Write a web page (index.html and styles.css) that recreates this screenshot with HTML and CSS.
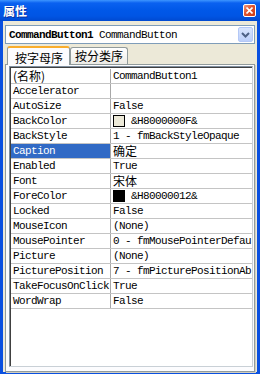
FILE: index.html
```html
<!DOCTYPE html>
<html lang="zh">
<head>
    <meta charset="UTF-8">
    <title>属性</title>
    <link rel="stylesheet" href="styles.css">
</head>
<body>
    <div class="window">
        <div class="titlebar">
            <span class="title">属性</span>
            <span class="close">
                <svg width="7" height="7" viewBox="0 0 7 7"><path d="M0.5 0.5 L6.5 6.5 M6.5 0.5 L0.5 6.5" stroke="#fff" stroke-width="1.6"/></svg>
            </span>
        </div>
        <div class="frame">
            <div class="combo">
                <span class="combo-text"><b>CommandButton1</b> CommandButton</span>
                <span class="drop">
                    <svg width="9" height="6" viewBox="0 0 9 6"><path d="M1 1 L4.5 4.5 L8 1" fill="none" stroke="#4d6185" stroke-width="2"/></svg>
                </span>
            </div>
            <div class="tabs">
                <span class="tab on">按字母序</span>
                <span class="tab">按分类序</span>
            </div>
            <div class="page">
                <div class="list">
                    <div class="row"><span class="name"><span class="cn">(名称)</span></span><span class="val">CommandButton1</span></div>
                    <div class="row"><span class="name">Accelerator</span><span class="val"></span></div>
                    <div class="row"><span class="name">AutoSize</span><span class="val">False</span></div>
                    <div class="row"><span class="name">BackColor</span><span class="val"><i class="swatch beige"></i>&amp;H8000000F&amp;</span></div>
                    <div class="row"><span class="name">BackStyle</span><span class="val">1 - fmBackStyleOpaque</span></div>
                    <div class="row"><span class="name sel">Caption</span><span class="val free"><span class="cn">确定</span></span></div>
                    <div class="row"><span class="name">Enabled</span><span class="val">True</span></div>
                    <div class="row"><span class="name">Font</span><span class="val free"><span class="cn">宋体</span></span></div>
                    <div class="row"><span class="name">ForeColor</span><span class="val"><i class="swatch black"></i>&amp;H80000012&amp;</span></div>
                    <div class="row"><span class="name">Locked</span><span class="val">False</span></div>
                    <div class="row"><span class="name">MouseIcon</span><span class="val">(None)</span></div>
                    <div class="row"><span class="name">MousePointer</span><span class="val">0 - fmMousePointerDefau</span></div>
                    <div class="row"><span class="name">Picture</span><span class="val">(None)</span></div>
                    <div class="row"><span class="name">PicturePosition</span><span class="val">7 - fmPicturePositionAb</span></div>
                    <div class="row"><span class="name">TakeFocusOnClick</span><span class="val">True</span></div>
                    <div class="row"><span class="name">WordWrap</span><span class="val">False</span></div>
                </div>
            </div>
        </div>
    </div>
</body>
</html>
```

FILE: styles.css
```css
body {
    margin: 0;
    font-family: "Liberation Mono", "Noto Sans CJK SC", monospace;
}
.window {
    width: 260px;
    height: 374px;
    display: flex;
    flex-direction: column;
    background: #ece9d8;
}
.titlebar {
    height: 21px;
    flex: none;
    display: flex;
    align-items: center;
    justify-content: space-between;
    padding: 0 4px 0 3px;
    background: linear-gradient(#3d95ff 0, #0a61f0 3px, #0058e8 10px, #0055e4 16px, #0049d0 21px);
}
.title {
    font-family: "Noto Sans CJK SC", sans-serif;
    font-weight: bold;
    font-size: 12px;
    color: #fff;
    text-shadow: 1px 1px 0 #0a2f9c;
    line-height: 14px;
}
.close {
    width: 11px;
    height: 11px;
    border: 1px solid #fff;
    border-radius: 2px;
    background: linear-gradient(135deg, #f09a80, #e0532e 45%, #c83c18);
    display: flex;
    align-items: center;
    justify-content: center;
    margin-top: -1px;
}
.frame {
    flex: 1;
    display: flex;
    flex-direction: column;
    border: solid #0a50e0;
    border-width: 0 3px 2px 3px;
    padding: 4px 2px 0 2px;
    min-height: 0;
}
.combo {
    height: 19px;
    box-sizing: border-box;
    border: 1px solid #7f9db9;
    background: #fff;
    display: flex;
    align-items: center;
    justify-content: space-between;
    padding: 0 1px 0 3px;
    font-size: 11px;
    letter-spacing: -0.6px;
}
.combo-text b {
    font-weight: bold;
}
.drop {
    width: 15px;
    height: 15px;
    box-sizing: border-box;
    border: 1px solid #b4c8f6;
    border-radius: 2px;
    background: linear-gradient(#d9e5fd, #bccffa);
    display: flex;
    align-items: center;
    justify-content: center;
}
.tabs {
    display: flex;
    align-items: flex-end;
    height: 19px;
    margin-top: 1px;
    padding-left: 2px;
    position: relative;
    z-index: 1;
}
.tab {
    font-family: "Noto Sans CJK SC", sans-serif;
    font-size: 12px;
    line-height: 15px;
    height: 16px;
    padding: 0 4px;
    border: 1px solid #919b9c;
    border-bottom: none;
    border-radius: 3px 3px 0 0;
    background: linear-gradient(#fff, #ecebe5);
    color: #000;
}
.tab.on {
    height: 17px;
    padding: 0 6px 0 7px;
    line-height: 19px;
    border-top: 2px solid #f9ad2c;
    background: #fcfcfe;
    margin-bottom: -1px;
}
.page {
    flex: 1;
    border: 1px solid #919b9c;
    background: #fcfcfe;
    box-shadow: 1px 1px 0 #d2cfc0;
    padding: 1px 1px 4px 3px;
    display: flex;
}
.list {
    flex: 1;
    border: 1px solid #7f8f9f;
    border-right-color: #c9d0d6;
    border-bottom-color: #c9d0d6;
    box-shadow: inset 1px 1px 0 #404040;
    background: #fff;
    padding: 2px 0 0 1px;
    overflow: hidden;
}
.row {
    display: flex;
    height: 14px;
    border-bottom: 1px solid #c4c4c4;
    font-size: 11px;
    letter-spacing: -0.6px;
    line-height: 14px;
    white-space: nowrap;
}
.name {
    width: 97px;
    flex: none;
    padding-left: 2px;
    border-right: 1px solid #a8a8a8;
}
.name.sel {
    background: #316ac5;
    color: #fff;
}
.val {
    flex: 1;
    padding-left: 2px;
    overflow: hidden;
    display: flex;
    align-items: center;
}
.val.free {
    overflow: visible;
}
.cn {
    font-family: "Noto Sans CJK SC", sans-serif;
    font-size: 12px;
    letter-spacing: 0;
}
.swatch {
    width: 10px;
    height: 10px;
    border: 1px solid #000;
    margin-right: 6px;
    flex: none;
}
.swatch.beige {
    background: #ece9d8;
}
.swatch.black {
    background: #000;
}
```
